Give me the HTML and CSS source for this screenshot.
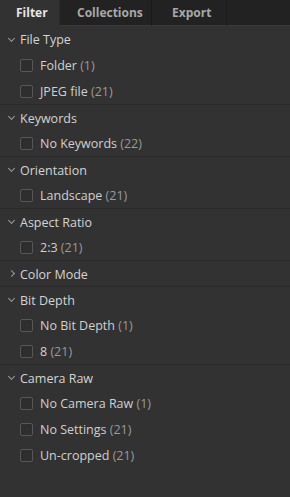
FILE: index.html
```html
<!DOCTYPE html>
<html lang="en">
<head>
  <meta charset="UTF-8">
  <title>Filter Panel</title>
  <link rel="stylesheet" href="styles.css">
</head>
<body>
  <div class="tabs">
    <div class="tab active">Filter</div>
    <div class="tab">Collections</div>
    <div class="tab">Export</div>
    <div class="tab-fill"></div>
  </div>

  <div class="panel">
    <div class="section">
      <div class="head"><span class="chev open"></span>File Type</div>
      <label class="item"><span class="box"></span>Folder&nbsp;<span class="count">(1)</span></label>
      <label class="item"><span class="box"></span>JPEG file&nbsp;<span class="count">(21)</span></label>
    </div>
    <div class="section">
      <div class="head"><span class="chev open"></span>Keywords</div>
      <label class="item"><span class="box"></span>No Keywords&nbsp;<span class="count">(22)</span></label>
    </div>
    <div class="section">
      <div class="head"><span class="chev open"></span>Orientation</div>
      <label class="item"><span class="box"></span>Landscape&nbsp;<span class="count">(21)</span></label>
    </div>
    <div class="section">
      <div class="head"><span class="chev open"></span>Aspect Ratio</div>
      <label class="item"><span class="box"></span>2:3&nbsp;<span class="count">(21)</span></label>
    </div>
    <div class="section">
      <div class="head"><span class="chev"></span>Color Mode</div>
    </div>
    <div class="section">
      <div class="head"><span class="chev open"></span>Bit Depth</div>
      <label class="item"><span class="box"></span>No Bit Depth&nbsp;<span class="count">(1)</span></label>
      <label class="item"><span class="box"></span>8&nbsp;<span class="count">(21)</span></label>
    </div>
    <div class="section">
      <div class="head"><span class="chev open"></span>Camera Raw</div>
      <label class="item"><span class="box"></span>No Camera Raw&nbsp;<span class="count">(1)</span></label>
      <label class="item"><span class="box"></span>No Settings&nbsp;<span class="count">(21)</span></label>
      <label class="item"><span class="box"></span>Un-cropped&nbsp;<span class="count">(21)</span></label>
    </div>
  </div>
</body>
</html>
```

FILE: styles.css
```css
html, body { margin: 0; height: 100%; }
body {
  background: #323232;
  color: #cfcfcf;
  font-family: "Open Sans", "Noto Sans", sans-serif;
  font-size: 12px;
}

.tabs { display: flex; height: 26px; background: #222; }
.tab {
  display: flex; align-items: center;
  padding: 0 16px 1px;
  font-weight: bold; color: #a8a8a8;
  border-right: 1px solid #1a1a1a;
  border-bottom: 1px solid #3a3a3a;
  box-sizing: border-box;
}
.tab:nth-child(2) { width: 92px; padding-left: 17px; }
.tab:nth-child(3) { width: 75px; padding-left: 20px; }
.tab.active { background: #323232; color: #e6e6e6; width: 60px; border-bottom-color: #323232; border-right-color: #2a2a2a; }
.tab-fill { flex: 1; border-bottom: 1px solid #3a3a3a; }

.section { border-top: 1px solid #2a2a2a; }
.section:first-child { border-top: none; }
.head {
  display: flex; align-items: center;
  height: 26px; padding: 1px 0 0 8px;
  box-sizing: border-box;
  color: #d4d4d4;
  font-size: 12.5px;
}
.section + .section .head { height: 25px; }
.chev {
  width: 12px; height: 12px;
  display: inline-block; position: relative;
}
.chev::before {
  content: ""; position: absolute;
  left: 1px; top: 3px;
  width: 4px; height: 4px;
  border-right: 1px solid #9a9a9a; border-bottom: 1px solid #9a9a9a;
  transform: rotate(-45deg);
}
.chev.open::before { transform: rotate(45deg); left: 1px; top: 2px; }

.item {
  display: flex; align-items: center;
  height: 26px; padding: 1px 0 0 20px;
  box-sizing: border-box;
  color: #d0d0d0;
  font-size: 12.5px;
}
.box {
  width: 11px; height: 11px;
  border: 1px solid #575757; border-radius: 2px;
  background: #2e2e2e;
  margin-right: 7px;
}
.count { color: #9a9a9a; }
```
